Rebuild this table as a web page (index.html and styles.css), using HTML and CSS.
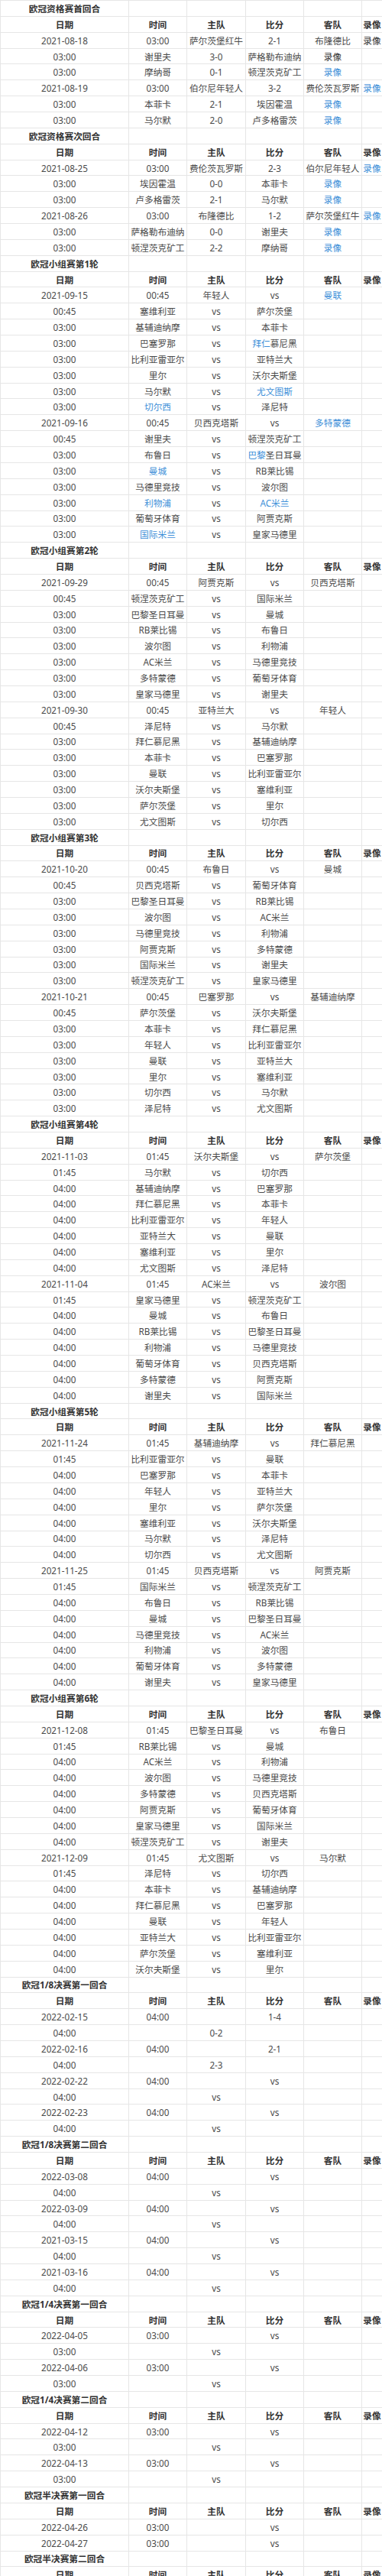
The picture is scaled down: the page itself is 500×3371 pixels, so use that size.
FILE: index.html
```html
<!DOCTYPE html>
<html lang="zh-CN">
<head>
<meta charset="utf-8">
<title>欧冠赛程</title>
<link rel="stylesheet" href="styles.css">
</head>
<body>
<table class="sched">
<colgroup><col class="c1"><col class="c2"><col class="c3"><col class="c4"><col class="c5"><col class="c6"></colgroup>
<tbody>
<tr><td class="t">欧冠资格赛首回合</td><td></td><td></td><td></td><td></td><td></td></tr>
<tr class="h"><td>日期</td><td>时间</td><td>主队</td><td>比分</td><td>客队</td><td>录像</td></tr>
<tr><td>2021-08-18</td><td>03:00</td><td>萨尔茨堡红牛</td><td>2-1</td><td>布隆德比</td><td class="dk">录像</td></tr>
<tr><td>03:00</td><td>谢里夫</td><td>3-0</td><td>萨格勒布迪纳</td><td class="dk">录像</td><td></td></tr>
<tr><td>03:00</td><td>摩纳哥</td><td>0-1</td><td>顿涅茨克矿工</td><td class="lk">录像</td><td></td></tr>
<tr><td>2021-08-19</td><td>03:00</td><td>伯尔尼年轻人</td><td>3-2</td><td>费伦茨瓦罗斯</td><td class="lk">录像</td></tr>
<tr><td>03:00</td><td>本菲卡</td><td>2-1</td><td>埃因霍温</td><td class="lk">录像</td><td></td></tr>
<tr><td>03:00</td><td>马尔默</td><td>2-0</td><td>卢多格雷茨</td><td class="lk">录像</td><td></td></tr>
<tr><td class="t">欧冠资格赛次回合</td><td></td><td></td><td></td><td></td><td></td></tr>
<tr class="h"><td>日期</td><td>时间</td><td>主队</td><td>比分</td><td>客队</td><td>录像</td></tr>
<tr><td>2021-08-25</td><td>03:00</td><td>费伦茨瓦罗斯</td><td>2-3</td><td>伯尔尼年轻人</td><td class="lk">录像</td></tr>
<tr><td>03:00</td><td>埃因霍温</td><td>0-0</td><td>本菲卡</td><td class="lk">录像</td><td></td></tr>
<tr><td>03:00</td><td>卢多格雷茨</td><td>2-1</td><td>马尔默</td><td class="lk">录像</td><td></td></tr>
<tr><td>2021-08-26</td><td>03:00</td><td>布隆德比</td><td>1-2</td><td>萨尔茨堡红牛</td><td class="lk">录像</td></tr>
<tr><td>03:00</td><td>萨格勒布迪纳</td><td>0-0</td><td>谢里夫</td><td class="lk">录像</td><td></td></tr>
<tr><td>03:00</td><td>顿涅茨克矿工</td><td>2-2</td><td>摩纳哥</td><td class="lk">录像</td><td></td></tr>
<tr><td class="t">欧冠小组赛第1轮</td><td></td><td></td><td></td><td></td><td></td></tr>
<tr class="h"><td>日期</td><td>时间</td><td>主队</td><td>比分</td><td>客队</td><td>录像</td></tr>
<tr><td>2021-09-15</td><td>00:45</td><td>年轻人</td><td>vs</td><td class="lk">曼联</td><td></td></tr>
<tr><td>00:45</td><td>塞维利亚</td><td>vs</td><td>萨尔茨堡</td><td></td><td></td></tr>
<tr><td>03:00</td><td>基辅迪纳摩</td><td>vs</td><td>本菲卡</td><td></td><td></td></tr>
<tr><td>03:00</td><td>巴塞罗那</td><td>vs</td><td><span class="lk">拜仁</span>慕尼黑</td><td></td><td></td></tr>
<tr><td>03:00</td><td>比利亚雷亚尔</td><td>vs</td><td>亚特兰大</td><td></td><td></td></tr>
<tr><td>03:00</td><td>里尔</td><td>vs</td><td>沃尔夫斯堡</td><td></td><td></td></tr>
<tr><td>03:00</td><td>马尔默</td><td>vs</td><td class="lk">尤文图斯</td><td></td><td></td></tr>
<tr><td>03:00</td><td class="lk">切尔西</td><td>vs</td><td>泽尼特</td><td></td><td></td></tr>
<tr><td>2021-09-16</td><td>00:45</td><td>贝西克塔斯</td><td>vs</td><td class="lk">多特蒙德</td><td></td></tr>
<tr><td>00:45</td><td>谢里夫</td><td>vs</td><td>顿涅茨克矿工</td><td></td><td></td></tr>
<tr><td>03:00</td><td>布鲁日</td><td>vs</td><td><span class="lk">巴黎</span>圣日耳曼</td><td></td><td></td></tr>
<tr><td>03:00</td><td class="lk">曼城</td><td>vs</td><td>RB莱比锡</td><td></td><td></td></tr>
<tr><td>03:00</td><td>马德里竞技</td><td>vs</td><td>波尔图</td><td></td><td></td></tr>
<tr><td>03:00</td><td class="lk">利物浦</td><td>vs</td><td class="lk">AC米兰</td><td></td><td></td></tr>
<tr><td>03:00</td><td>葡萄牙体育</td><td>vs</td><td>阿贾克斯</td><td></td><td></td></tr>
<tr><td>03:00</td><td class="lk">国际米兰</td><td>vs</td><td>皇家马德里</td><td></td><td></td></tr>
<tr><td class="t">欧冠小组赛第2轮</td><td></td><td></td><td></td><td></td><td></td></tr>
<tr class="h"><td>日期</td><td>时间</td><td>主队</td><td>比分</td><td>客队</td><td>录像</td></tr>
<tr><td>2021-09-29</td><td>00:45</td><td>阿贾克斯</td><td>vs</td><td>贝西克塔斯</td><td></td></tr>
<tr><td>00:45</td><td>顿涅茨克矿工</td><td>vs</td><td>国际米兰</td><td></td><td></td></tr>
<tr><td>03:00</td><td>巴黎圣日耳曼</td><td>vs</td><td>曼城</td><td></td><td></td></tr>
<tr><td>03:00</td><td>RB莱比锡</td><td>vs</td><td>布鲁日</td><td></td><td></td></tr>
<tr><td>03:00</td><td>波尔图</td><td>vs</td><td>利物浦</td><td></td><td></td></tr>
<tr><td>03:00</td><td>AC米兰</td><td>vs</td><td>马德里竞技</td><td></td><td></td></tr>
<tr><td>03:00</td><td>多特蒙德</td><td>vs</td><td>葡萄牙体育</td><td></td><td></td></tr>
<tr><td>03:00</td><td>皇家马德里</td><td>vs</td><td>谢里夫</td><td></td><td></td></tr>
<tr><td>2021-09-30</td><td>00:45</td><td>亚特兰大</td><td>vs</td><td>年轻人</td><td></td></tr>
<tr><td>00:45</td><td>泽尼特</td><td>vs</td><td>马尔默</td><td></td><td></td></tr>
<tr><td>03:00</td><td>拜仁慕尼黑</td><td>vs</td><td>基辅迪纳摩</td><td></td><td></td></tr>
<tr><td>03:00</td><td>本菲卡</td><td>vs</td><td>巴塞罗那</td><td></td><td></td></tr>
<tr><td>03:00</td><td>曼联</td><td>vs</td><td>比利亚雷亚尔</td><td></td><td></td></tr>
<tr><td>03:00</td><td>沃尔夫斯堡</td><td>vs</td><td>塞维利亚</td><td></td><td></td></tr>
<tr><td>03:00</td><td>萨尔茨堡</td><td>vs</td><td>里尔</td><td></td><td></td></tr>
<tr><td>03:00</td><td>尤文图斯</td><td>vs</td><td>切尔西</td><td></td><td></td></tr>
<tr><td class="t">欧冠小组赛第3轮</td><td></td><td></td><td></td><td></td><td></td></tr>
<tr class="h"><td>日期</td><td>时间</td><td>主队</td><td>比分</td><td>客队</td><td>录像</td></tr>
<tr><td>2021-10-20</td><td>00:45</td><td>布鲁日</td><td>vs</td><td>曼城</td><td></td></tr>
<tr><td>00:45</td><td>贝西克塔斯</td><td>vs</td><td>葡萄牙体育</td><td></td><td></td></tr>
<tr><td>03:00</td><td>巴黎圣日耳曼</td><td>vs</td><td>RB莱比锡</td><td></td><td></td></tr>
<tr><td>03:00</td><td>波尔图</td><td>vs</td><td>AC米兰</td><td></td><td></td></tr>
<tr><td>03:00</td><td>马德里竞技</td><td>vs</td><td>利物浦</td><td></td><td></td></tr>
<tr><td>03:00</td><td>阿贾克斯</td><td>vs</td><td>多特蒙德</td><td></td><td></td></tr>
<tr><td>03:00</td><td>国际米兰</td><td>vs</td><td>谢里夫</td><td></td><td></td></tr>
<tr><td>03:00</td><td>顿涅茨克矿工</td><td>vs</td><td>皇家马德里</td><td></td><td></td></tr>
<tr><td>2021-10-21</td><td>00:45</td><td>巴塞罗那</td><td>vs</td><td>基辅迪纳摩</td><td></td></tr>
<tr><td>00:45</td><td>萨尔茨堡</td><td>vs</td><td>沃尔夫斯堡</td><td></td><td></td></tr>
<tr><td>03:00</td><td>本菲卡</td><td>vs</td><td>拜仁慕尼黑</td><td></td><td></td></tr>
<tr><td>03:00</td><td>年轻人</td><td>vs</td><td>比利亚雷亚尔</td><td></td><td></td></tr>
<tr><td>03:00</td><td>曼联</td><td>vs</td><td>亚特兰大</td><td></td><td></td></tr>
<tr><td>03:00</td><td>里尔</td><td>vs</td><td>塞维利亚</td><td></td><td></td></tr>
<tr><td>03:00</td><td>切尔西</td><td>vs</td><td>马尔默</td><td></td><td></td></tr>
<tr><td>03:00</td><td>泽尼特</td><td>vs</td><td>尤文图斯</td><td></td><td></td></tr>
<tr><td class="t">欧冠小组赛第4轮</td><td></td><td></td><td></td><td></td><td></td></tr>
<tr class="h"><td>日期</td><td>时间</td><td>主队</td><td>比分</td><td>客队</td><td>录像</td></tr>
<tr><td>2021-11-03</td><td>01:45</td><td>沃尔夫斯堡</td><td>vs</td><td>萨尔茨堡</td><td></td></tr>
<tr><td>01:45</td><td>马尔默</td><td>vs</td><td>切尔西</td><td></td><td></td></tr>
<tr><td>04:00</td><td>基辅迪纳摩</td><td>vs</td><td>巴塞罗那</td><td></td><td></td></tr>
<tr><td>04:00</td><td>拜仁慕尼黑</td><td>vs</td><td>本菲卡</td><td></td><td></td></tr>
<tr><td>04:00</td><td>比利亚雷亚尔</td><td>vs</td><td>年轻人</td><td></td><td></td></tr>
<tr><td>04:00</td><td>亚特兰大</td><td>vs</td><td>曼联</td><td></td><td></td></tr>
<tr><td>04:00</td><td>塞维利亚</td><td>vs</td><td>里尔</td><td></td><td></td></tr>
<tr><td>04:00</td><td>尤文图斯</td><td>vs</td><td>泽尼特</td><td></td><td></td></tr>
<tr><td>2021-11-04</td><td>01:45</td><td>AC米兰</td><td>vs</td><td>波尔图</td><td></td></tr>
<tr><td>01:45</td><td>皇家马德里</td><td>vs</td><td>顿涅茨克矿工</td><td></td><td></td></tr>
<tr><td>04:00</td><td>曼城</td><td>vs</td><td>布鲁日</td><td></td><td></td></tr>
<tr><td>04:00</td><td>RB莱比锡</td><td>vs</td><td>巴黎圣日耳曼</td><td></td><td></td></tr>
<tr><td>04:00</td><td>利物浦</td><td>vs</td><td>马德里竞技</td><td></td><td></td></tr>
<tr><td>04:00</td><td>葡萄牙体育</td><td>vs</td><td>贝西克塔斯</td><td></td><td></td></tr>
<tr><td>04:00</td><td>多特蒙德</td><td>vs</td><td>阿贾克斯</td><td></td><td></td></tr>
<tr><td>04:00</td><td>谢里夫</td><td>vs</td><td>国际米兰</td><td></td><td></td></tr>
<tr><td class="t">欧冠小组赛第5轮</td><td></td><td></td><td></td><td></td><td></td></tr>
<tr class="h"><td>日期</td><td>时间</td><td>主队</td><td>比分</td><td>客队</td><td>录像</td></tr>
<tr><td>2021-11-24</td><td>01:45</td><td>基辅迪纳摩</td><td>vs</td><td>拜仁慕尼黑</td><td></td></tr>
<tr><td>01:45</td><td>比利亚雷亚尔</td><td>vs</td><td>曼联</td><td></td><td></td></tr>
<tr><td>04:00</td><td>巴塞罗那</td><td>vs</td><td>本菲卡</td><td></td><td></td></tr>
<tr><td>04:00</td><td>年轻人</td><td>vs</td><td>亚特兰大</td><td></td><td></td></tr>
<tr><td>04:00</td><td>里尔</td><td>vs</td><td>萨尔茨堡</td><td></td><td></td></tr>
<tr><td>04:00</td><td>塞维利亚</td><td>vs</td><td>沃尔夫斯堡</td><td></td><td></td></tr>
<tr><td>04:00</td><td>马尔默</td><td>vs</td><td>泽尼特</td><td></td><td></td></tr>
<tr><td>04:00</td><td>切尔西</td><td>vs</td><td>尤文图斯</td><td></td><td></td></tr>
<tr><td>2021-11-25</td><td>01:45</td><td>贝西克塔斯</td><td>vs</td><td>阿贾克斯</td><td></td></tr>
<tr><td>01:45</td><td>国际米兰</td><td>vs</td><td>顿涅茨克矿工</td><td></td><td></td></tr>
<tr><td>04:00</td><td>布鲁日</td><td>vs</td><td>RB莱比锡</td><td></td><td></td></tr>
<tr><td>04:00</td><td>曼城</td><td>vs</td><td>巴黎圣日耳曼</td><td></td><td></td></tr>
<tr><td>04:00</td><td>马德里竞技</td><td>vs</td><td>AC米兰</td><td></td><td></td></tr>
<tr><td>04:00</td><td>利物浦</td><td>vs</td><td>波尔图</td><td></td><td></td></tr>
<tr><td>04:00</td><td>葡萄牙体育</td><td>vs</td><td>多特蒙德</td><td></td><td></td></tr>
<tr><td>04:00</td><td>谢里夫</td><td>vs</td><td>皇家马德里</td><td></td><td></td></tr>
<tr><td class="t">欧冠小组赛第6轮</td><td></td><td></td><td></td><td></td><td></td></tr>
<tr class="h"><td>日期</td><td>时间</td><td>主队</td><td>比分</td><td>客队</td><td>录像</td></tr>
<tr><td>2021-12-08</td><td>01:45</td><td>巴黎圣日耳曼</td><td>vs</td><td>布鲁日</td><td></td></tr>
<tr><td>01:45</td><td>RB莱比锡</td><td>vs</td><td>曼城</td><td></td><td></td></tr>
<tr><td>04:00</td><td>AC米兰</td><td>vs</td><td>利物浦</td><td></td><td></td></tr>
<tr><td>04:00</td><td>波尔图</td><td>vs</td><td>马德里竞技</td><td></td><td></td></tr>
<tr><td>04:00</td><td>多特蒙德</td><td>vs</td><td>贝西克塔斯</td><td></td><td></td></tr>
<tr><td>04:00</td><td>阿贾克斯</td><td>vs</td><td>葡萄牙体育</td><td></td><td></td></tr>
<tr><td>04:00</td><td>皇家马德里</td><td>vs</td><td>国际米兰</td><td></td><td></td></tr>
<tr><td>04:00</td><td>顿涅茨克矿工</td><td>vs</td><td>谢里夫</td><td></td><td></td></tr>
<tr><td>2021-12-09</td><td>01:45</td><td>尤文图斯</td><td>vs</td><td>马尔默</td><td></td></tr>
<tr><td>01:45</td><td>泽尼特</td><td>vs</td><td>切尔西</td><td></td><td></td></tr>
<tr><td>04:00</td><td>本菲卡</td><td>vs</td><td>基辅迪纳摩</td><td></td><td></td></tr>
<tr><td>04:00</td><td>拜仁慕尼黑</td><td>vs</td><td>巴塞罗那</td><td></td><td></td></tr>
<tr><td>04:00</td><td>曼联</td><td>vs</td><td>年轻人</td><td></td><td></td></tr>
<tr><td>04:00</td><td>亚特兰大</td><td>vs</td><td>比利亚雷亚尔</td><td></td><td></td></tr>
<tr><td>04:00</td><td>萨尔茨堡</td><td>vs</td><td>塞维利亚</td><td></td><td></td></tr>
<tr><td>04:00</td><td>沃尔夫斯堡</td><td>vs</td><td>里尔</td><td></td><td></td></tr>
<tr><td class="t">欧冠1/8决赛第一回合</td><td></td><td></td><td></td><td></td><td></td></tr>
<tr class="h"><td>日期</td><td>时间</td><td>主队</td><td>比分</td><td>客队</td><td>录像</td></tr>
<tr><td>2022-02-15</td><td>04:00</td><td></td><td>1-4</td><td></td><td></td></tr>
<tr><td>04:00</td><td></td><td>0-2</td><td></td><td></td><td></td></tr>
<tr><td>2022-02-16</td><td>04:00</td><td></td><td>2-1</td><td></td><td></td></tr>
<tr><td>04:00</td><td></td><td>2-3</td><td></td><td></td><td></td></tr>
<tr><td>2022-02-22</td><td>04:00</td><td></td><td>vs</td><td></td><td></td></tr>
<tr><td>04:00</td><td></td><td>vs</td><td></td><td></td><td></td></tr>
<tr><td>2022-02-23</td><td>04:00</td><td></td><td>vs</td><td></td><td></td></tr>
<tr><td>04:00</td><td></td><td>vs</td><td></td><td></td><td></td></tr>
<tr><td class="t">欧冠1/8决赛第二回合</td><td></td><td></td><td></td><td></td><td></td></tr>
<tr class="h"><td>日期</td><td>时间</td><td>主队</td><td>比分</td><td>客队</td><td>录像</td></tr>
<tr><td>2022-03-08</td><td>04:00</td><td></td><td>vs</td><td></td><td></td></tr>
<tr><td>04:00</td><td></td><td>vs</td><td></td><td></td><td></td></tr>
<tr><td>2022-03-09</td><td>04:00</td><td></td><td>vs</td><td></td><td></td></tr>
<tr><td>04:00</td><td></td><td>vs</td><td></td><td></td><td></td></tr>
<tr><td>2021-03-15</td><td>04:00</td><td></td><td>vs</td><td></td><td></td></tr>
<tr><td>04:00</td><td></td><td>vs</td><td></td><td></td><td></td></tr>
<tr><td>2021-03-16</td><td>04:00</td><td></td><td>vs</td><td></td><td></td></tr>
<tr><td>04:00</td><td></td><td>vs</td><td></td><td></td><td></td></tr>
<tr><td class="t">欧冠1/4决赛第一回合</td><td></td><td></td><td></td><td></td><td></td></tr>
<tr class="h"><td>日期</td><td>时间</td><td>主队</td><td>比分</td><td>客队</td><td>录像</td></tr>
<tr><td>2022-04-05</td><td>03:00</td><td></td><td>vs</td><td></td><td></td></tr>
<tr><td>03:00</td><td></td><td>vs</td><td></td><td></td><td></td></tr>
<tr><td>2022-04-06</td><td>03:00</td><td></td><td>vs</td><td></td><td></td></tr>
<tr><td>03:00</td><td></td><td>vs</td><td></td><td></td><td></td></tr>
<tr><td class="t">欧冠1/4决赛第二回合</td><td></td><td></td><td></td><td></td><td></td></tr>
<tr class="h"><td>日期</td><td>时间</td><td>主队</td><td>比分</td><td>客队</td><td>录像</td></tr>
<tr><td>2022-04-12</td><td>03:00</td><td></td><td>vs</td><td></td><td></td></tr>
<tr><td>03:00</td><td></td><td>vs</td><td></td><td></td><td></td></tr>
<tr><td>2022-04-13</td><td>03:00</td><td></td><td>vs</td><td></td><td></td></tr>
<tr><td>03:00</td><td></td><td>vs</td><td></td><td></td><td></td></tr>
<tr><td class="t">欧冠半决赛第一回合</td><td></td><td></td><td></td><td></td><td></td></tr>
<tr class="h"><td>日期</td><td>时间</td><td>主队</td><td>比分</td><td>客队</td><td>录像</td></tr>
<tr><td>2022-04-26</td><td>03:00</td><td></td><td>vs</td><td></td><td></td></tr>
<tr><td>2022-04-27</td><td>03:00</td><td></td><td>vs</td><td></td><td></td></tr>
<tr><td class="t">欧冠半决赛第二回合</td><td></td><td></td><td></td><td></td><td></td></tr>
<tr class="h"><td>日期</td><td>时间</td><td>主队</td><td>比分</td><td>客队</td><td>录像</td></tr>
</tbody>
</table>
</body>
</html>
```

FILE: styles.css
```css
html, body {
  margin: 0;
  padding: 0;
  background: #ffffff;
}

.sched {
  border-collapse: collapse;
  table-layout: fixed;
  width: 500px;
  font-family: "Noto Sans", "Noto Sans CJK SC", sans-serif;
  font-size: 11.7px;
  color: #4a4a4a;
}

.c1 { width: 168px; }
.c2 { width: 76px; }
.c3 { width: 77px; }
.c4 { width: 76px; }
.c5 { width: 76px; }
.c6 { width: 27px; }

.sched tr {
  height: 20.86px;
}

.sched td {
  padding: 0;
  border: 1px solid #e6e6e6;
  text-align: center;
  vertical-align: middle;
  white-space: nowrap;
  overflow: hidden;
  line-height: 16px;
}

.sched .t {
  font-weight: bold;
  color: #333333;
}

.sched .h td {
  font-weight: bold;
  color: #333333;
}

.sched .lk {
  color: #3d8fd8;
}

.sched .dk {
  color: #333333;
}
```
